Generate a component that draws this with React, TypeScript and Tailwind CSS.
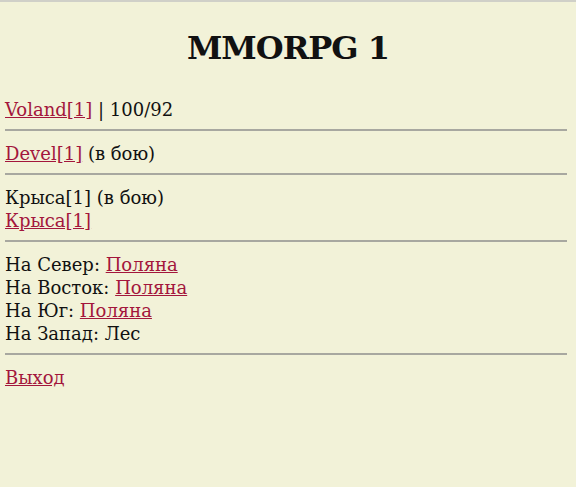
import React from "react";

const L = ({ children }: { children: React.ReactNode }) => (
  <a href="#" className="text-[#a3163c] underline">{children}</a>
);

const Hr = () => <div className="h-[2px] bg-[#a8a8a0] mr-[4px] mt-[8px] mb-[11px]" />;

export default function App() {
  return (
    <div className="min-h-[487px] bg-[#f2f2d8] border-t-2 border-[#d0d0c8] px-[5px] text-[18px] leading-[23px] text-[#111]" style={{ fontFamily: '"DejaVu Serif", serif' }}>
      <h1 className="text-center font-bold text-[32px] leading-[40px] pt-[26px] pb-[30px] tracking-[-1px]">MMORPG 1</h1>
      <div><L>Voland[1]</L> | 100/92</div>
      <Hr />
      <div><L>Devel[1]</L> (в бою)</div>
      <Hr />
      <div>Крыса[1] (в бою)</div>
      <div><L>Крыса[1]</L></div>
      <Hr />
      <div>На Север: <L>Поляна</L></div>
      <div>На Восток: <L>Поляна</L></div>
      <div>На Юг: <L>Поляна</L></div>
      <div>На Запад: Лес</div>
      <Hr />
      <div><L>Выход</L></div>
    </div>
  );
}
